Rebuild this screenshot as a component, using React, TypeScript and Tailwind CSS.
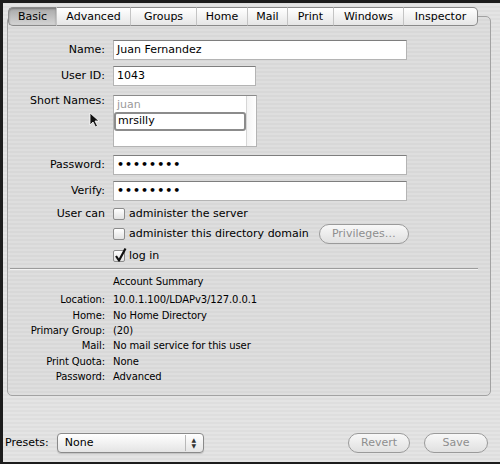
import React from 'react';

const tabs = [
  { label: 'Basic', w: 'w-[49px]' },
  { label: 'Advanced', w: 'w-[74px]' },
  { label: 'Groups', w: 'w-[66px]' },
  { label: 'Home', w: 'w-[51px]' },
  { label: 'Mail', w: 'w-[40px]' },
  { label: 'Print', w: 'w-[46px]' },
  { label: 'Windows', w: 'w-[70px]' },
  { label: 'Inspector', w: 'w-[74px]' },
];

const summary = [
  ['Location:', '10.0.1.100/LDAPv3/127.0.0.1'],
  ['Home:', 'No Home Directory'],
  ['Primary Group:', '(20)'],
  ['Mail:', 'No mail service for this user'],
  ['Print Quota:', 'None'],
  ['Password:', 'Advanced'],
];

const TextField = ({ value, className }: { value: string; className: string }) => (
  <div
    className={`h-[20px] bg-white border border-[#b4b4b4] border-t-[#7e7e7e] flex items-center pl-[3px] ${className}`}
  >
    {value}
  </div>
);

const Checkbox = ({ checked }: { checked?: boolean }) => (
  <div className="relative w-[12px] h-[12px] rounded-[2px] border border-[#8c8c8c] bg-linear-to-b from-white to-[#e2e2e2] shrink-0">
    {checked && (
      <svg className="absolute left-[0px] -top-[4px] overflow-visible" width="13" height="16" viewBox="0 0 13 16">
        <path d="M2 9 L5 13.5 L11.5 1.5" fill="none" stroke="#111" strokeWidth="2.2" strokeLinejoin="round" />
      </svg>
    )}
  </div>
);

const PillButton = ({ label, className }: { label: string; className: string }) => (
  <div
    className={`h-[20px] rounded-full border border-[#9a9a9a] bg-linear-to-b from-[#f8f8f8] to-[#e0e0e0] text-[#8e8e8e] flex items-center justify-center ${className}`}
  >
    {label}
  </div>
);

const Row = ({ label, children, className = '' }: { label: string; children: React.ReactNode; className?: string }) => (
  <div className={`flex items-center ${className}`}>
    <div className="w-[97px] text-right shrink-0">{label}</div>
    <div className="ml-[8px] flex items-center">{children}</div>
  </div>
);

export default function App() {
  return (
    <div className="w-[500px] h-[464px] overflow-hidden border-l-[3px] border-t-[3px] border-b-[2px] border-[#1c1c1c] bg-[image:repeating-linear-gradient(0deg,#e4e4e4_0px,#e4e4e4_2px,#dedede_2px,#dedede_4px)] font-['DejaVu_Sans',sans-serif] text-[11px] text-black flex flex-col">
      <div className="ml-[4px] mt-[4px] w-[484px]">
        {/* tabs */}
        <div className="relative z-10 flex pl-[1px] h-[19px]">
          {tabs.map((t, i) => (
            <div
              key={t.label}
              className={`${t.w} h-[19px] flex items-center justify-center pt-[1px] border-y border-[#8a8a8a] ${
                i === 0 ? 'border-l rounded-l-[5px]' : ''
              } ${i === tabs.length - 1 ? 'border-r rounded-r-[5px]' : 'border-r border-r-[#c4c4c4]'} ${
                i === 0
                  ? 'bg-linear-to-b from-[#a9a9a9] to-[#d4d4d4] shadow-[inset_0_1px_2px_rgba(0,0,0,0.3)]'
                  : 'bg-linear-to-b from-white to-[#e6e6e6]'
              }`}
            >
              {t.label}
            </div>
          ))}
        </div>

        {/* panel */}
        <div className="-mt-[10px] h-[380px] border border-[#a2a2a2] rounded-[5px] bg-[image:repeating-linear-gradient(0deg,#dedede_0px,#dedede_2px,#d8d8d8_2px,#d8d8d8_4px)] pt-[23px]">
          <Row label="Name:">
            <TextField value="Juan Fernandez" className="w-[294px]" />
          </Row>
          <Row label="User ID:" className="mt-[6px]">
            <TextField value="1043" className="w-[143px]" />
          </Row>

          <div className="flex mt-[9px] relative">
            <div className="w-[97px] text-right shrink-0 leading-[12px]">Short Names:</div>
            <div className="ml-[8px] w-[144px] h-[52px] bg-white border border-[#b4b4b4] border-t-[#8a8a8a] flex">
              <div className="flex-1 flex flex-col">
                <div className="h-[16px] pl-[3px] pt-[1px] text-[#9a9a9a]">juan</div>
                <div className="h-[19px] border-2 border-[#8c8c8c] rounded-[3px] pl-[2px] flex items-center">
                  mrsilly
                </div>
              </div>
              <div className="w-[10px] border-l border-[#d6d6d6] bg-linear-to-r from-[#f4f4f4] to-white" />
            </div>
            <svg className="absolute left-[81px] top-[17px]" width="10" height="16" viewBox="0 0 10 16">
              <path d="M1 1 L1 13 L4 10 L6.5 15 L8.5 14 L6 9 L10 9 Z" fill="#111" stroke="white" strokeWidth="0.8" />
            </svg>
          </div>

          <Row label="Password:" className="mt-[8px]">
            <TextField value="••••••••" className="w-[294px] tracking-[1px] font-bold" />
          </Row>
          <Row label="Verify:" className="mt-[6px]">
            <TextField value="••••••••" className="w-[294px] tracking-[1px] font-bold" />
          </Row>

          <Row label="User can" className="mt-[3px] h-[20px]">
            <Checkbox />
            <span className="ml-[4px]">administer the server</span>
          </Row>
          <Row label="" className="h-[20px]">
            <Checkbox />
            <span className="ml-[4px]">administer this directory domain</span>
            <PillButton label="Privileges…" className="ml-[10px] w-[90px]" />
          </Row>
          <Row label="" className="mt-[2px] h-[20px]">
            <Checkbox checked />
            <span className="ml-[4px]">log in</span>
          </Row>

          <div className="mt-[2px] ml-[2px] w-[468px] border-t border-[#9c9c9c] border-b border-b-[#f2f2f2]" />

          <div className="text-[10px] tracking-[-0.1px]">
            <div className="mt-[4px] h-[14px] flex items-center pl-[105px]">Account Summary</div>
            <div className="mt-[4px]">
              {summary.map(([k, v]) => (
                <div key={k} className="h-[15.4px] flex items-center">
                  <div className="w-[97px] text-right shrink-0">{k}</div>
                  <div className="ml-[8px]">{v}</div>
                </div>
              ))}
            </div>
          </div>
        </div>
      </div>

      {/* bottom bar */}
      <div className="mt-[37px] flex items-center pl-[2px]">
        <span>Presets:</span>
        <div className="ml-[8px] w-[147px] h-[20px] rounded-[4px] border border-[#8a8a8a] bg-linear-to-b from-white to-[#e4e4e4] flex items-center shadow-[0_1px_1px_rgba(0,0,0,0.15)]">
          <span className="pl-[7px] flex-1">None</span>
          <div className="w-[17px] h-[16px] mr-[1px] border-l border-[#b8b8b8] flex flex-col items-center justify-center text-[6px] leading-[6px] text-[#333]">
            <span>▲</span>
            <span>▼</span>
          </div>
        </div>
        <div className="ml-auto mr-[12px] flex gap-[14px]">
          <PillButton label="Revert" className="w-[62px]" />
          <PillButton label="Save" className="w-[64px]" />
        </div>
      </div>
    </div>
  );
}
